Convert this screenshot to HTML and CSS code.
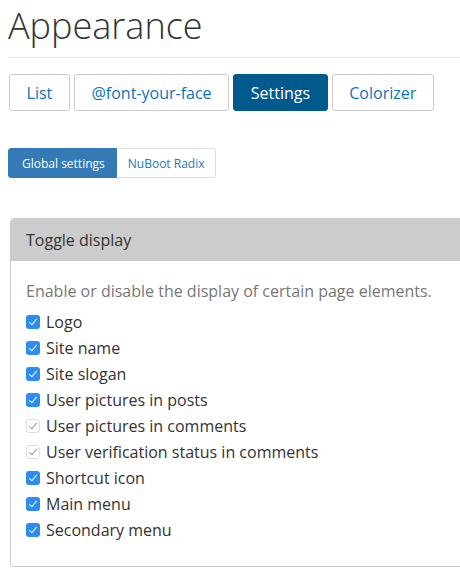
FILE: index.html
```html
<!DOCTYPE html>
<html>
<head>
<meta charset="utf-8">
<link rel="stylesheet" href="styles.css">
</head>
<body>
<h1 class="title">Appearance</h1>
<div class="rule"></div>
<nav class="tabs">
  <a class="tab">List</a>
  <a class="tab">@font-your-face</a>
  <a class="tab active">Settings</a>
  <a class="tab">Colorizer</a>
</nav>
<nav class="subtabs">
  <a class="subtab active">Global settings</a>
  <a class="subtab">NuBoot Radix</a>
</nav>
<section class="panel">
  <div class="panel-head">Toggle display</div>
  <div class="panel-body">
    <p class="desc">Enable or disable the display of certain page elements.</p>
    <ul class="checks">
      <li><span class="cb"></span>Logo</li>
      <li><span class="cb"></span>Site name</li>
      <li><span class="cb"></span>Site slogan</li>
      <li><span class="cb"></span>User pictures in posts</li>
      <li><span class="cb off"></span>User pictures in comments</li>
      <li><span class="cb off"></span>User verification status in comments</li>
      <li><span class="cb"></span>Shortcut icon</li>
      <li><span class="cb"></span>Main menu</li>
      <li><span class="cb"></span>Secondary menu</li>
    </ul>
  </div>
</section>
</body>
</html>
```
FILE: styles.css
```css
html, body { margin: 0; padding: 0; }
body {
  font-family: "Open Sans", "Liberation Sans", sans-serif;
  color: #333;
  background: #fff;
  width: 452px;
  padding-left: 8px;
  overflow: hidden;
  height: 580px;
}
.title {
  font-weight: 300;
  font-size: 36px;
  line-height: 40px;
  margin: 6px 0 0 0;
  color: #333;
  letter-spacing: 0;
}
.rule {
  height: 1px;
  background: #e4e4e4;
  margin-top: 11px;
}
.tabs {
  display: flex;
  gap: 4px;
  margin-top: 16px;
  padding-left: 1px;
}
.tab {
  height: 35px;
  border: 1px solid #ccc;
  border-radius: 3px;
  display: flex;
  align-items: center;
  padding: 0 16.6px;
  font-size: 16px;
  color: #0b73bb;
}
.tab.active {
  background: #005a8d;
  border-color: #005a8d;
  color: #fff;
}
.subtabs {
  display: flex;
  margin-top: 37px;
}
.subtab {
  height: 28px;
  border: 1px solid #ddd;
  display: flex;
  align-items: center;
  padding: 0 11px;
  font-size: 12px;
  color: #1a7cc4;
}
.subtab.active {
  background: #337ab7;
  border-color: #337ab7;
  color: #fff;
  border-radius: 3px 0 0 3px;
  padding: 0 11px 0 13px;
}
.subtab:last-child {
  border-left: none;
  border-radius: 0 3px 3px 0;
  padding: 0 11px 0 11px;
}
.panel {
  margin-top: 40px;
  margin-left: 2px;
  width: 470px;
  border: 1px solid #ccc;
  border-radius: 4px;
}
.panel-head {
  background: #ccc;
  height: 42px;
  display: flex;
  align-items: center;
  padding-left: 15px;
  font-size: 16px;
  color: #333;
  border-radius: 3px 3px 0 0;
}
.panel-body {
  padding: 19px 15px 23px 15px;
}
.desc {
  margin: 0 0 7px 0;
  font-size: 16px;
  line-height: 22px;
  color: #777;
}
.checks {
  list-style: none;
  margin: 0;
  padding: 0;
}
.checks li {
  display: flex;
  align-items: center;
  height: 26px;
  font-size: 16px;
  color: #333;
}
.cb {
  width: 14px;
  height: 14px;
  border-radius: 3px;
  background: #2e8cf0;
  margin-right: 6px;
  position: relative;
  flex: none;
}
.cb::after {
  content: "";
  position: absolute;
  left: 4.5px;
  top: 2px;
  width: 3px;
  height: 7px;
  border: solid #fff;
  border-width: 0 1.6px 1.6px 0;
  transform: rotate(40deg);
}
.cb.off {
  background: #fff;
  border: 1px solid #ddd;
  width: 12px;
  height: 12px;
}
.cb.off::after {
  border-color: #999;
  left: 3.5px;
  top: 1px;
  border-width: 0 1.2px 1.2px 0;
}
```
